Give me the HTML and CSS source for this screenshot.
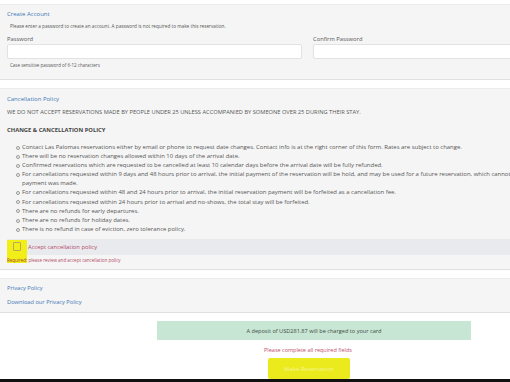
FILE: index.html
```html
<!DOCTYPE html>
<html lang="en">
<head>
  <meta charset="UTF-8">
  <title>Reservation</title>
  <link rel="stylesheet" href="styles.css">
</head>
<body>
  <div class="page">
    <!-- Create Account -->
    <section class="panel account">
      <h2 class="panel-title">Create Account</h2>
      <p class="note">Please enter a password to create an account. A password is not required to make this reservation.</p>
      <div class="fields">
        <div class="field">
          <label>Password</label>
          <input type="password" class="text-input">
          <p class="note">Case sensitive password of 6-12 characters</p>
        </div>
        <div class="field">
          <label>Confirm Password</label>
          <input type="password" class="text-input">
        </div>
      </div>
    </section>

    <!-- Cancellation Policy -->
    <section class="panel policy">
      <h2 class="panel-title">Cancellation Policy</h2>
      <p class="policy-text">WE DO NOT ACCEPT RESERVATIONS MADE BY PEOPLE UNDER 25 UNLESS ACCOMPANIED BY SOMEONE OVER 25 DURING THEIR STAY.</p>
      <p class="policy-head">CHANGE &amp; CANCELLATION POLICY</p>
      <ul class="policy-list">
        <li>Contact Las Palomas reservations either by email or phone to request date changes. Contact info is at the right corner of this form. Rates are subject to change.</li>
        <li>There will be no reservation changes allowed within 10 days of the arrival date.</li>
        <li>Confirmed reservations which are requested to be cancelled at least 10 calendar days before the arrival date will be fully refunded.</li>
        <li class="wrap">For cancellations requested within 9 days and 48 hours prior to arrival, the initial payment of the reservation will be hold, and may be used for a future reservation, which cannot be more than 6 months from the date the payment was made.</li>
        <li>For cancellations requested within 48 and 24 hours prior to arrival, the initial reservation payment will be forfeited as a cancellation fee.</li>
        <li>For cancellations requested within 24 hours prior to arrival and no-shows, the total stay will be forfeited.</li>
        <li>There are no refunds for early departures.</li>
        <li>There are no refunds for holiday dates.</li>
        <li>There is no refund in case of eviction, zero tolerance policy.</li>
      </ul>
      <label class="accept-row">
        <span class="mark"><input type="checkbox" class="accept-box"></span>
        <span class="accept-text">Accept cancellation policy</span>
      </label>
      <p class="required"><span class="mark-text">Required:</span> please review and accept cancellation policy</p>
    </section>

    <!-- Privacy -->
    <section class="panel privacy">
      <a href="#" class="link">Privacy Policy</a>
      <a href="#" class="link">Download our Privacy Policy</a>
    </section>

    <div class="summary">
      <div class="deposit">A deposit of USD281.87 will be charged to your card</div>
      <p class="error">Please complete all required fields</p>
      <button class="submit">Make Reservation</button>
    </div>
  </div>
  <div class="taskbar"></div>
</body>
</html>
```

FILE: styles.css
```css
body {
  margin: 0;
  background: #fff;
  font-family: "Open Sans", "Noto Sans", sans-serif;
  color: #555;
  height: 382px;
  overflow: hidden;
  display: flex;
  flex-direction: column;
}

.page {
  width: 628px;
  padding-top: 4px;
  flex: 1;
}

.panel {
  background: #f5f5f5;
  border-top: 1px solid #ececec;
  border-bottom: 1px solid #e0e0e0;
  padding: 0 0 0 7px;
}

.panel-title {
  margin: 0;
  font-size: 6px;
  font-weight: normal;
  color: #3f78b5;
  line-height: 9px;
}

.note {
  margin: 0;
  font-size: 4.7px;
  color: #555;
}

/* Create Account */
.account {
  height: 76px;
  padding-top: 5px;
  box-sizing: border-box;
}

.account > .note {
  margin: 4px 0 0 3px;
}

.fields {
  display: grid;
  grid-template-columns: 295px 295px;
  gap: 11px;
  margin-top: 5px;
}

.field label {
  display: block;
  font-size: 5.8px;
  color: #555;
  line-height: 10px;
}

.text-input {
  display: block;
  width: 100%;
  height: 15px;
  box-sizing: border-box;
  border: 1px solid #e2e2e2;
  border-radius: 2px;
  background: #fff;
  margin: 0;
}

.field .note {
  margin: 3px 0 0 3px;
  font-size: 4.5px;
}

/* Cancellation Policy */
.policy {
  margin-top: 8px;
  height: 182px;
  box-sizing: border-box;
  padding-top: 6px;
}

.policy-text {
  margin: 4px 0 0;
  font-size: 5.7px;
  line-height: 9px;
}

.policy-head {
  margin: 9px 0 0;
  font-size: 5.8px;
  font-weight: bold;
  color: #444;
  line-height: 9px;
}

.policy-list {
  margin: 8px 0 0;
  padding: 0;
  list-style: none;
  font-size: 5.95px;
  line-height: 9.1px;
  white-space: nowrap;
}

.policy-list li {
  position: relative;
  padding-left: 15px;
}

.policy-list li::before {
  content: "";
  position: absolute;
  left: 9px;
  top: 2.8px;
  width: 2px;
  height: 2px;
  border: 0.6px solid #999;
  border-radius: 50%;
}

.policy-list li.wrap {
  white-space: normal;
  width: 612px;
}

.accept-row {
  display: flex;
  align-items: center;
  margin: 5px 0 0 0;
  height: 16px;
  background: #e9eaee;
}

.mark {
  display: flex;
  align-items: center;
  justify-content: center;
  width: 20px;
  height: 17px;
  margin-top: 3px;
  background: #f1ee18;
}

.accept-box {
  width: 8px;
  height: 9px;
  margin: 0 0 3px;
  border: 1px solid #b8a95a;
  appearance: none;
  background: transparent;
  border-radius: 1px;
}

.accept-text {
  margin-left: 1px;
  font-size: 5.8px;
  color: #b34966;
}

.required {
  margin: 2px 0 0;
  font-size: 4.5px;
  color: #b34966;
}

.mark-text {
  background: #f1ee18;
  color: #a5403a;
}

/* Privacy */
.privacy {
  margin-top: 8px;
  display: flex;
  flex-direction: column;
  gap: 5px;
  padding-top: 5px;
  padding-bottom: 5px;
}

.link {
  font-size: 5.7px;
  color: #3f78b5;
  text-decoration: none;
  line-height: 9px;
}

/* Summary */
.summary {
  display: flex;
  flex-direction: column;
  align-items: center;
  padding-top: 8px;
}

.deposit {
  width: 314px;
  height: 19px;
  background: #c8e6d4;
  font-size: 5.6px;
  color: #3f4a44;
  display: flex;
  align-items: center;
  justify-content: center;
}

.error {
  margin: 6px 12px 0 0;
  font-size: 5.5px;
  color: #c24f6d;
}

.submit {
  margin: 4px 10px 0 0;
  width: 82px;
  height: 21px;
  border: none;
  border-radius: 2px;
  background: #ebea1d;
  color: #f6f59a;
  font-family: inherit;
  font-size: 6px;
}

.taskbar {
  height: 3px;
  background: #111;
}
```
